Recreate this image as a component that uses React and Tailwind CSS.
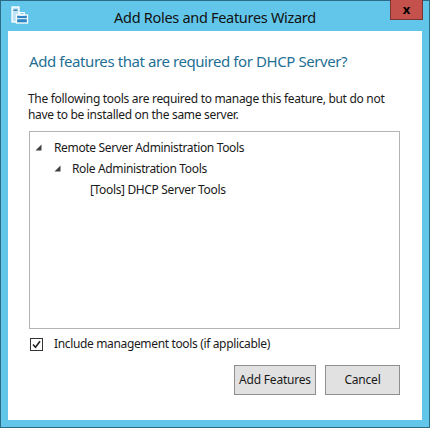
import React from 'react';

const font = { fontFamily: '"Noto Sans", "Segoe UI", sans-serif' };

function WizardIcon() {
  return (
    <svg width="20" height="20" viewBox="0 0 20 20">
      <rect x="1" y="1" width="7" height="15" fill="#bfe4f6" stroke="#ffffff" strokeWidth="1.3" />
      <rect x="2.5" y="3.5" width="4" height="1.3" fill="#2a6fa8" />
      <rect x="5.5" y="9" width="11" height="8" fill="#2f86c6" stroke="#ffffff" strokeWidth="1.3" />
      <rect x="8.7" y="6.6" width="4.6" height="2.4" fill="none" stroke="#ffffff" strokeWidth="1.2" />
      <rect x="6" y="12.2" width="10" height="1" fill="#ffffff" />
    </svg>
  );
}

function TreeArrow() {
  return (
    <svg width="7" height="7" viewBox="0 0 7 7" className="shrink-0">
      <polygon points="6.5,0.5 6.5,6.5 0.5,6.5" fill="#404040" />
    </svg>
  );
}

export default function App() {
  return (
    <div className="w-[430px] h-[428px] bg-[#2d6a86] p-px" style={font}>
      <div className="w-full h-full bg-[#62c6ea] flex flex-col px-[7px] pb-[7px]">
        {/* Title bar */}
        <div className="h-[30px] flex items-start">
          <div className="pt-[5px] pl-[3px] w-[40px]">
            <WizardIcon />
          </div>
          <div className="flex-1 text-center text-[14.5px] text-[#111] pt-[6px] tracking-[-0.3px] pr-[8px]">
            Add Roles and Features Wizard
          </div>
          <div className="w-[33px] h-[20px] -mt-px -mr-px bg-[#c5514c] border border-[#7d3330] border-t-0 flex items-center justify-center text-[13px] font-bold text-black leading-none">
            x
          </div>
        </div>

        {/* Client area */}
        <div className="flex-1 bg-white flex flex-col pl-[21px] pr-[22px]">
          <h1 className="text-[15px] text-[#1f6f94] mt-[20px] leading-[20px] tracking-[-0.42px]">
            Add features that are required for DHCP Server?
          </h1>

          <p className="text-[12px] text-[#1a1a1a] mt-[20px] leading-[16px] tracking-[-0.3px] -ml-[1px]">
            The following tools are required to manage this feature, but do not
            <br />
            have to be installed on the same server.
          </p>

          <div className="mt-[8px] h-[198px] border border-[#b4b4b4] pt-[5px] text-[12px] text-[#1a1a1a] tracking-[-0.35px]">
            <div className="flex items-center h-[21px] pl-[5px] gap-[12px]">
              <TreeArrow />
              <span>Remote Server Administration Tools</span>
            </div>
            <div className="flex items-center h-[21px] pl-[24px] gap-[11px]">
              <TreeArrow />
              <span>Role Administration Tools</span>
            </div>
            <div className="flex items-center h-[21px] pl-[60px]">
              <span>[Tools] DHCP Server Tools</span>
            </div>
          </div>

          <label className="flex items-center mt-[6px] text-[12px] text-[#1a1a1a] tracking-[-0.35px]">
            <span className="w-[13px] h-[13px] border border-[#333] bg-white flex items-center justify-center ml-[1px]">
              <svg width="9" height="9" viewBox="0 0 9 9">
                <polyline points="1,4.5 3.5,7.2 8,1.2" fill="none" stroke="#222" strokeWidth="1.6" />
              </svg>
            </span>
            <span className="ml-[11px]">Include management tools (if applicable)</span>
          </label>

          <div className="flex justify-end gap-[9px] mt-[12px] text-[12px] text-[#1a1a1a] tracking-[-0.2px]">
            <button className="w-[82px] h-[30px] bg-[#e1e1e1] border border-[#8f8f8f]">
              Add Features
            </button>
            <button className="w-[75px] h-[30px] bg-[#e1e1e1] border border-[#8f8f8f]">
              Cancel
            </button>
          </div>
        </div>
      </div>
    </div>
  );
}
